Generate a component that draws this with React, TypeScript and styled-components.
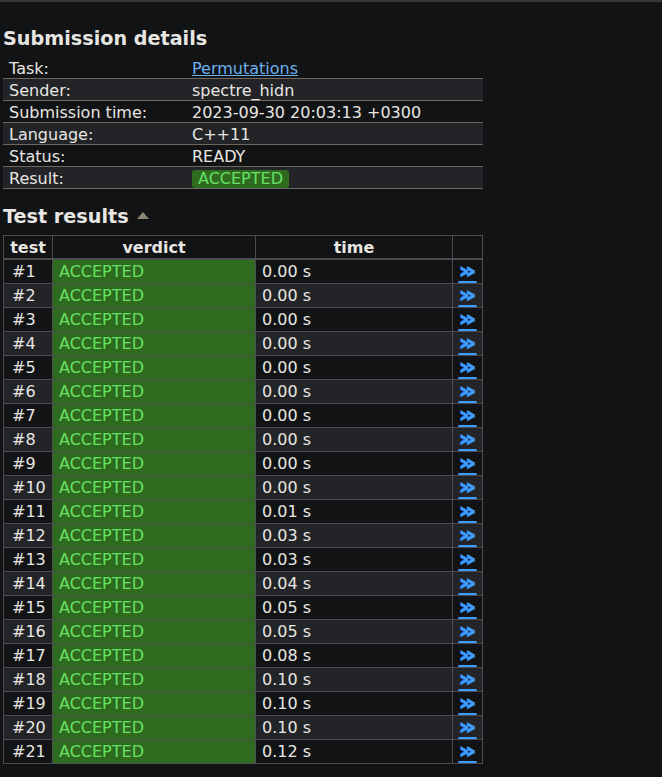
import React from "react";
import styled, { createGlobalStyle } from "styled-components";

const Global = createGlobalStyle`
  html, body {
    margin: 0;
    padding: 0;
    background: #121314;
    color: #e8e6e3;
    font-family: "DejaVu Sans", Verdana, sans-serif;
    font-size: 16px;
  }
`;

const TopBar = styled.div`
  border-top: 2px solid #35373a;
`;

const Page = styled.div`
  padding: 25px 0 20px 3px;
  width: 480px;
`;

const Heading = styled.h2`
  margin: 0 0 7px 0;
  font-size: 19.2px;
  font-weight: bold;
  line-height: 23px;
  display: flex;
  align-items: center;
  gap: 8px;
`;

const SortArrow = styled.span`
  display: inline-block;
  width: 0;
  height: 0;
  border-left: 6px solid transparent;
  border-right: 6px solid transparent;
  border-bottom: 7px solid #8c8476;
  margin-top: -3px;
`;

const DetailsTable = styled.table`
  border-collapse: collapse;
  width: 480px;
  margin-bottom: 16px;
`;

const DetailRow = styled.tr<{ $alt?: boolean }>`
  background: ${(p) => (p.$alt ? "#222427" : "transparent")};
  border-bottom: 1px solid #6e675d;
`;

const DetailLabel = styled.td`
  width: 183px;
  padding: 2px 0 0 6px;
  height: 19px;
  line-height: 19px;
`;

const DetailValue = styled.td`
  padding: 2px 0 0 0;
  height: 19px;
  line-height: 19px;
`;

const Link = styled.a`
  color: #6cb0ee;
  text-decoration: underline;
`;

const Badge = styled.span`
  display: inline-block;
  background: #2f6b1f;
  color: #66e066;
  border-radius: 3px;
  padding: 0 6px;
  line-height: 18px;
`;

const ResultsTable = styled.table`
  border-collapse: collapse;
  width: 480px;
  border: 1px solid #4b4d50;
`;

const HeadCell = styled.th<{ $w?: number }>`
  border: 1px solid #4b4d50;
  border-bottom: 2px solid #4b4d50;
  font-weight: bold;
  text-align: center;
  height: 21px;
  padding: 1px 0 0 0;
  line-height: 20px;
  width: ${(p) => (p.$w ? `${p.$w}px` : "auto")};
`;

const TestRow = styled.tr<{ $alt?: boolean }>`
  background: ${(p) => (p.$alt ? "#222427" : "transparent")};
`;

const Cell = styled.td<{ $verdict?: boolean }>`
  border: 1px solid #4b4d50;
  height: 22px;
  padding: 1px 6px 0 6px;
  line-height: 22px;
  background: ${(p) => (p.$verdict ? "#2f6b1f" : "transparent")};
  color: ${(p) => (p.$verdict ? "#66e066" : "#e8e6e3")};
`;

const NumCell = styled(Cell)`
  padding-left: 8px;
`;

const LinkCell = styled(Cell)`
  padding: 0;
  text-align: center;
`;

const Chevron = styled.a`
  display: block;
  height: 20px;
  color: #3c9cff;
  font-weight: bold;
  font-size: 21px;
  line-height: 19px;
  -webkit-text-stroke: 0.7px #3c9cff;
  text-decoration: underline;
  text-decoration-thickness: 2px;
  text-underline-offset: 3px;
  transform: scaleX(1.35);
`;

const details: [string, React.ReactNode][] = [
  ["Task:", <Link href="#">Permutations</Link>],
  ["Sender:", "spectre_hidn"],
  ["Submission time:", "2023-09-30 20:03:13 +0300"],
  ["Language:", "C++11"],
  ["Status:", "READY"],
  ["Result:", <Badge>ACCEPTED</Badge>],
];

const times = [
  "0.00", "0.00", "0.00", "0.00", "0.00", "0.00", "0.00", "0.00", "0.00", "0.00",
  "0.01", "0.03", "0.03", "0.04", "0.05", "0.05", "0.08", "0.10", "0.10", "0.10", "0.12",
];

export default function App() {
  return (
    <>
      <Global />
      <TopBar />
      <Page>
        <Heading>Submission details</Heading>
        <DetailsTable>
          <tbody>
            {details.map(([k, v], i) => (
              <DetailRow key={k} $alt={i % 2 === 1}>
                <DetailLabel>{k}</DetailLabel>
                <DetailValue>{v}</DetailValue>
              </DetailRow>
            ))}
          </tbody>
        </DetailsTable>
        <Heading>
          Test results <SortArrow />
        </Heading>
        <ResultsTable>
          <thead>
            <tr>
              <HeadCell $w={48}>test</HeadCell>
              <HeadCell $w={202}>verdict</HeadCell>
              <HeadCell $w={196}>time</HeadCell>
              <HeadCell $w={29}></HeadCell>
            </tr>
          </thead>
          <tbody>
            {times.map((t, i) => (
              <TestRow key={i} $alt={i % 2 === 1}>
                <NumCell>#{i + 1}</NumCell>
                <Cell $verdict>ACCEPTED</Cell>
                <Cell>{t} s</Cell>
                <LinkCell>
                  <Chevron href="#">»</Chevron>
                </LinkCell>
              </TestRow>
            ))}
          </tbody>
        </ResultsTable>
      </Page>
    </>
  );
}
